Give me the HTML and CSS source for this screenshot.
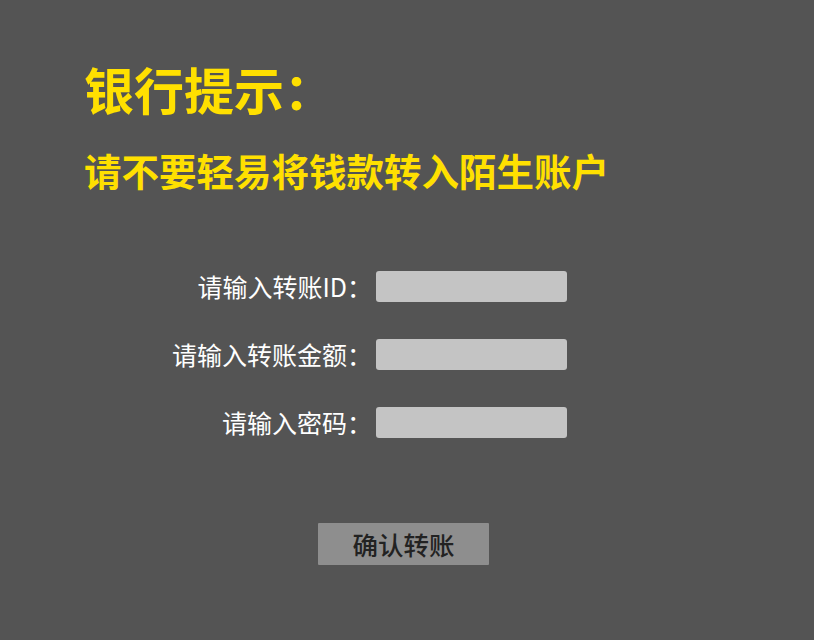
FILE: index.html
```html
<!DOCTYPE html>
<html lang="zh-CN">
<head>
<meta charset="utf-8">
<title>银行提示</title>
<link rel="stylesheet" href="styles.css">
</head>
<body>
<div class="page">
  <header class="notice">
    <h1 class="notice-title">银行提示：</h1>
    <p class="notice-text">请不要轻易将钱款转入陌生账户</p>
  </header>
  <form class="transfer">
    <label class="field-label" for="tid">请输入转账ID：</label>
    <input class="field-input" id="tid" type="text">
    <label class="field-label" for="amount">请输入转账金额：</label>
    <input class="field-input" id="amount" type="text">
    <label class="field-label" for="pwd">请输入密码：</label>
    <input class="field-input" id="pwd" type="password">
  </form>
  <div class="actions">
    <button class="submit" type="button">确认转账</button>
  </div>
</div>
</body>
</html>
```
FILE: styles.css
```css
html, body {
  margin: 0;
  padding: 0;
  background: #545454;
  height: 100%;
}
body {
  font-family: "Noto Sans CJK SC", "Noto Sans", sans-serif;
}
.page {
  width: 807px;
  padding-top: 63px;
}
.notice {
  padding-left: 84px;
}
.notice-title {
  margin: 0;
  font-size: 50px;
  line-height: 50px;
  font-weight: 700;
  color: #ffe000;
}
.notice-text {
  margin: 38px 0 0;
  font-size: 37.5px;
  line-height: 38px;
  font-weight: 700;
  color: #ffe000;
}
.transfer {
  margin-top: 82px;
  display: grid;
  grid-template-columns: 372px 191px;
  column-gap: 4px;
  row-gap: 37px;
  align-items: center;
}
.field-label {
  text-align: right;
  font-size: 25px;
  line-height: 31px;
  color: #ffffff;
}
.field-input {
  box-sizing: border-box;
  height: 31px;
  width: 191px;
  border: none;
  border-radius: 3px;
  background: #c4c4c4;
  padding: 0 6px;
  margin: 0;
}
.actions {
  display: flex;
  justify-content: center;
  margin-top: 85px;
}
.submit {
  width: 171px;
  height: 42px;
  border: none;
  border-radius: 1px;
  background: #8e8e8e;
  color: #222222;
  font-family: "Noto Sans CJK SC", sans-serif;
  font-size: 25.5px;
  font-weight: 500;
  line-height: 42px;
  padding: 0;
}
```
